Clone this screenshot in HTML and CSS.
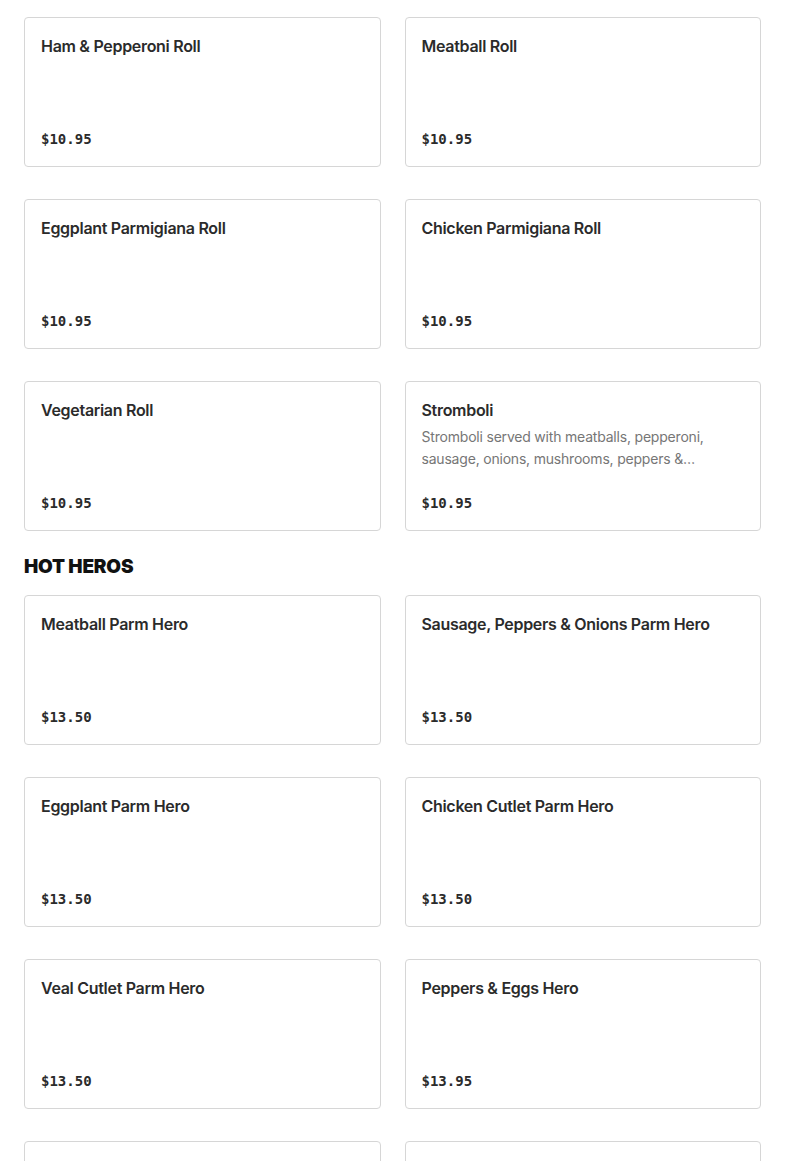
FILE: index.html
```html
<!DOCTYPE html>
<html lang="en">
<head>
<meta charset="utf-8">
<title>Menu</title>
<link rel="stylesheet" href="styles.css">
</head>
<body>
<main class="menu">
  <section class="section">
    <div class="grid">
      <div class="card"><div class="title">Ham &amp; Pepperoni Roll</div><div class="price">$10.95</div></div>
      <div class="card"><div class="title">Meatball Roll</div><div class="price">$10.95</div></div>
      <div class="card"><div class="title">Eggplant Parmigiana Roll</div><div class="price">$10.95</div></div>
      <div class="card"><div class="title">Chicken Parmigiana Roll</div><div class="price">$10.95</div></div>
      <div class="card"><div class="title">Vegetarian Roll</div><div class="price">$10.95</div></div>
      <div class="card"><div class="title">Stromboli</div><div class="desc">Stromboli served with meatballs, pepperoni, sausage, onions, mushrooms, peppers &amp; mozzarella cheese</div><div class="price">$10.95</div></div>
    </div>
  </section>
  <section class="section">
    <h2 class="heading">HOT HEROS</h2>
    <div class="grid">
      <div class="card"><div class="title">Meatball Parm Hero</div><div class="price">$13.50</div></div>
      <div class="card"><div class="title">Sausage, Peppers &amp; Onions Parm Hero</div><div class="price">$13.50</div></div>
      <div class="card"><div class="title">Eggplant Parm Hero</div><div class="price">$13.50</div></div>
      <div class="card"><div class="title">Chicken Cutlet Parm Hero</div><div class="price">$13.50</div></div>
      <div class="card"><div class="title">Veal Cutlet Parm Hero</div><div class="price">$13.50</div></div>
      <div class="card"><div class="title">Peppers &amp; Eggs Hero</div><div class="price">$13.95</div></div>
      <div class="card faded"><div class="title">Italian Sausage Parm Hero</div><div class="price">$13.50</div></div>
      <div class="card faded"><div class="title">Grilled Chicken Parm Hero</div><div class="price">$13.50</div></div>
    </div>
  </section>
</main>
</body>
</html>
```

FILE: styles.css
```css
* { box-sizing: border-box; }
html, body { margin: 0; padding: 0; background: #ffffff; }
body {
  font-family: Inter, "Noto Sans", "Liberation Sans", sans-serif;
  color: #2a2a2a;
}
.menu {
  padding: 17px 24px 40px 24px;
}
.section + .section { margin-top: 24px; }
.heading {
  margin: 0 0 16px 0;
  font-family: Inter, "Liberation Sans", sans-serif;
  font-size: 19px;
  line-height: 24px;
  font-weight: 900;
  color: #111111;
  letter-spacing: -0.2px;
}
.grid {
  display: grid;
  grid-template-columns: 1fr 1fr;
  column-gap: 24px;
  row-gap: 32px;
}
.card {
  display: flex;
  flex-direction: column;
  height: 150px;
  padding: 16px 16px 17px 16px;
  border: 1px solid #d6d6d6;
  border-radius: 4px;
  background: #fff;
}
.title {
  font-size: 16px;
  line-height: 24px;
  font-weight: 600;
  letter-spacing: -0.3px;
  color: #2b2b2b;
}
.faded .title { color: #d8d8d8; }
.desc {
  margin-top: 4px;
  font-size: 14px;
  line-height: 22px;
  letter-spacing: -0.2px;
  color: #767676;
  display: -webkit-box;
  -webkit-line-clamp: 2;
  -webkit-box-orient: vertical;
  overflow: hidden;
}
.price {
  margin-top: auto;
  font-family: "DejaVu Sans Mono", "Liberation Mono", monospace;
  font-size: 14px;
  line-height: 20px;
  font-weight: 700;
  color: #2b2b2b;
}
```
